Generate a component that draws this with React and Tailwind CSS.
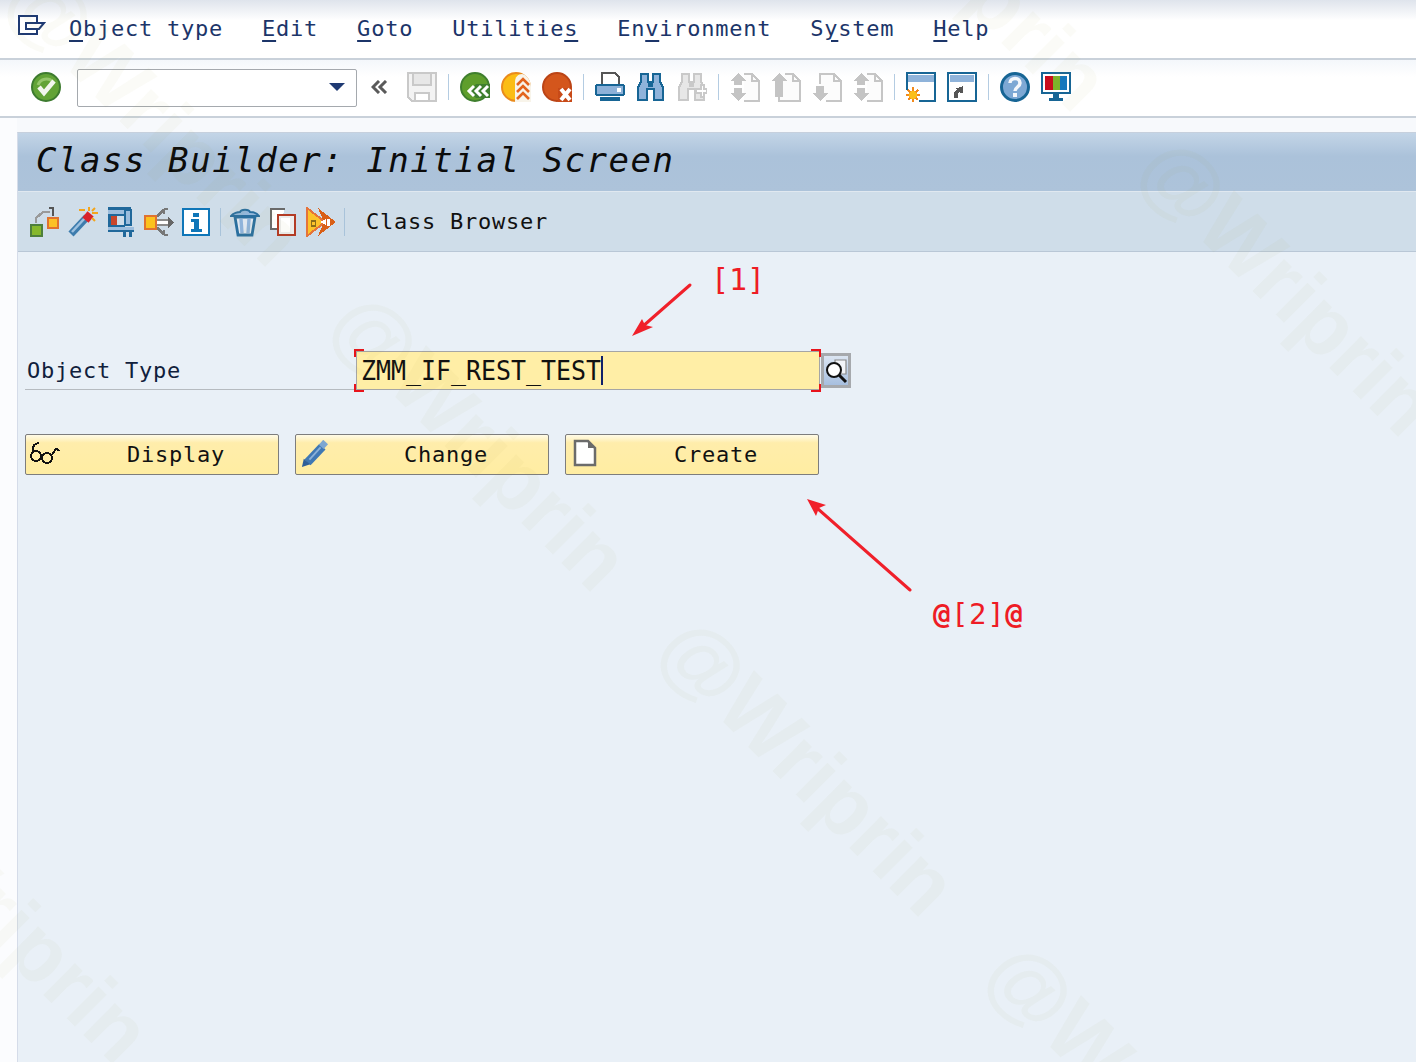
const MONO = 'font-["DejaVu_Sans_Mono","Liberation_Mono",monospace]';

function S({ children, className = "w-[30px] h-[30px]", box = "0 0 30 30", crisp = false }) {
  return (
    <svg viewBox={box} className={"shrink-0 " + className} shapeRendering={crisp ? "crispEdges" : "auto"}>
      {children}
    </svg>
  );
}

const Sep = () => <div className="w-px h-[26px] bg-[#b4cce2] shrink-0" />;
const Sep2 = () => <div className="w-px h-[28px] bg-[#a9c3da] shrink-0" />;

const IcMenu = () => (
  <svg viewBox="0 0 28 20" className="w-[28px] h-[20px]" fill="none" stroke="#1f3a73" strokeWidth="2">
    <path d="M19 8V1H1v18h18v-5" />
    <path d="M8 8h18l-5 6H8z" fill="#fff" />
  </svg>
);
const IcCheck = () => (
  <S>
    <circle cx="15" cy="15" r="14" fill="#62a336" stroke="#3d7b2f" strokeWidth="2" />
    <path d="M7 13a9 9 0 0 1 15-3" stroke="#94c66a" strokeWidth="3" fill="none" />
    <path d="M8 15l5 6 10-12" stroke="#f2f6ee" strokeWidth="4.5" fill="none" />
  </S>
);
const IcSave = () => (
  <S crisp>
    <path d="M1 1h28v28H5l-4-4z" fill="#f3f3f3" stroke="#c9c9c9" strokeWidth="2.5" />
    <rect x="6" y="1" width="18" height="12" fill="#e7e7e7" stroke="#c9c9c9" strokeWidth="2.5" />
    <rect x="8" y="21" width="14" height="8" fill="#fff" stroke="#c9c9c9" strokeWidth="2.5" />
  </S>
);
const IcBack = () => (
  <S>
    <circle cx="15" cy="15" r="14" fill="#5f9e2c" stroke="#3f7f2e" strokeWidth="2" />
    <path d="M16 12l-7 7 7 7h8l-7-7 7-7zM24 12l-7 7 7 7h6V12z" fill="#3f7f2e" />
    <path d="M14 14l-5 5 5 5M21 14l-5 5 5 5M28 14l-5 5 5 5" stroke="#fff" strokeWidth="3" fill="none" />
  </S>
);
const IcExit = () => (
  <S>
    <circle cx="15" cy="15" r="14" fill="#fbbd14" stroke="#ea8b1c" strokeWidth="2" />
    <path d="M14 30V10c0-5 3-8 7-8 5 1 9 7 9 13v15z" fill="#f8f4ea" />
    <path d="M16 13l6-6 6 6M16 20l6-6 6 6M16 27l6-6 6 6" stroke="#e3641c" strokeWidth="2.6" fill="none" />
  </S>
);
const IcCancel = () => (
  <S>
    <circle cx="15" cy="15" r="14" fill="#d4561c" stroke="#bb4416" strokeWidth="2" />
    <path d="M16 16h14v14H16z" fill="#c84a18" />
    <path d="M19 17l9 11M28 17l-9 11" stroke="#fff" strokeWidth="4" />
  </S>
);
const IcPrint = () => (
  <S crisp>
    <path d="M7 13V1h13l4 4v8" fill="#fff" stroke="#555" strokeWidth="2" />
    <rect x="1" y="13" width="28" height="10" rx="2" fill="#8db1d8" stroke="#176595" strokeWidth="2" />
    <rect x="22" y="16" width="4" height="4" fill="#fff" />
    <rect x="5" y="25" width="20" height="4" fill="#176595" />
  </S>
);
const Binoc = ({ line, fill }) => (
  <>
    <path d="M5 2h7v8h5V2h7v8l3 5v13h-9V17h-7v11H2V15l3-5z" fill={fill} stroke={line} strokeWidth="2.2" />
    <path d="M12 10h5v5h-5z" fill={line} />
  </>
);
const IcFind = () => (
  <S crisp><Binoc line="#176595" fill="#8fb3da" /></S>
);
const IcFindNext = () => (
  <S crisp>
    <Binoc line="#c9c9c9" fill="#e7e7e7" />
    <path d="M19 17h5v-4h3v4h3v4h-3v4h-3v-4h-5z" fill="#fff" stroke="#c9c9c9" strokeWidth="1.5" />
  </S>
);
const Page = ({ d }) => (
  <>
    <path d={d} fill="#fcfcfc" stroke="#c6c6c6" strokeWidth="2" />
    <path d="M22 2v7h7" fill="none" stroke="#c6c6c6" strokeWidth="2" />
  </>
);
const IcFirst = () => (
  <S crisp>
    <Page d="M14 2h8l7 7v20H14" />
    <path d="M8 1l8 8h-4v4H4V9H0zM8 29l-8-8h4v-5h8v5h4z" fill="#c4c4c4" />
  </S>
);
const IcPrev = () => (
  <S crisp>
    <Page d="M8 20v9h21V9l-7-7H14" />
    <path d="M8 1l8 8h-4v16H4V9H0z" fill="#c4c4c4" />
  </S>
);
const IcNext = () => (
  <S crisp>
    <Page d="M8 12V2h14l7 7v20H14" />
    <path d="M8 29l8-8h-4V14H4v7H0z" fill="#c4c4c4" />
  </S>
);
const IcLast = () => (
  <S crisp>
    <Page d="M14 2h8l7 7v20H14" />
    <path d="M8 1l8 8h-4v4H4V9H0zM8 29l-8-8h4v-5h8v5h4z" fill="#c4c4c4" />
  </S>
);
const IcWinNew = () => (
  <S crisp>
    <path d="M13 29h16V1H1v17" fill="#fff" stroke="#176595" strokeWidth="2" />
    <rect x="2" y="3" width="26" height="7" fill="#8fb3da" />
    <path d="M7 15v15M0 23h14M2 18l10 10M12 18L2 28" stroke="#f28a1c" strokeWidth="1.6" />
    <circle cx="7" cy="23" r="4" fill="#fbbf1a" />
  </S>
);
const IcWinShort = () => (
  <S crisp>
    <rect x="1" y="1" width="28" height="28" fill="#fff" stroke="#176595" strokeWidth="2" />
    <rect x="3" y="3" width="24" height="7" fill="#8fb3da" />
    <path d="M7 26v-6l3-3H8l8-3v7h-3v-2l-2 3v4z" fill="#555" />
  </S>
);
const IcHelp = () => (
  <S>
    <circle cx="15" cy="15" r="13.5" fill="#7da8d4" stroke="#176595" strokeWidth="3" />
    <path d="M10 11c0-6 10-6 10 0 0 4-5 4-5 8" stroke="#f4f7fb" strokeWidth="3.5" fill="none" />
    <rect x="13" y="21" width="4" height="4" fill="#f4f7fb" />
  </S>
);
const IcMonitor = () => (
  <S crisp>
    <rect x="1" y="1" width="28" height="20" fill="#fff" stroke="#176595" strokeWidth="2" />
    <rect x="4" y="4" width="8" height="14" fill="#c9071b" />
    <rect x="12" y="4" width="7" height="14" fill="#7cb32a" />
    <rect x="19" y="4" width="7" height="14" fill="#1477bd" />
    <rect x="12" y="22" width="6" height="4" fill="#176595" />
    <rect x="8" y="26" width="14" height="3" fill="#176595" />
  </S>
);

const IcHier = () => (
  <S crisp>
    <path d="M6 16v-5l7-6h7" fill="none" stroke="#9a9a9a" strokeWidth="2.4" />
    <path d="M19 1h4v8" fill="none" stroke="#555" strokeWidth="2" />
    <rect x="1" y="18" width="11" height="11" fill="#86b82c" stroke="#4e7f3c" strokeWidth="2.6" />
    <rect x="18" y="11" width="10" height="10" fill="#fcc126" stroke="#e0722f" strokeWidth="2.6" />
  </S>
);
const IcWand = () => (
  <S>
    <path d="M3 27L19 10" stroke="#3d7cad" strokeWidth="7" />
    <path d="M4 25L17 11" stroke="#9dc0df" strokeWidth="2.5" />
    <rect x="16" y="6" width="8" height="8" fill="#d9232b" transform="rotate(40 20 10)" />
    <path d="M21 0v4M30 6h-6M27 1l-3 3M27 14l-3-3M11 3h6" stroke="#f3a51c" strokeWidth="2" />
  </S>
);
const IcClamp = () => (
  <S crisp box="0 0 26 30" className="w-[26px] h-[30px]">
    <rect x="0" y="0" width="23" height="3" fill="#20689b" />
    <rect x="0" y="3" width="17" height="4" fill="#9cbddd" />
    <rect x="0" y="7" width="17" height="2" fill="#20689b" />
    <rect x="17" y="3" width="6" height="15" fill="#9cbddd" stroke="#20689b" strokeWidth="1.6" />
    <rect x="0" y="9" width="3" height="9" fill="#20689b" />
    <rect x="3" y="9" width="6" height="9" fill="#c9452a" />
    <rect x="0" y="18" width="17" height="2" fill="#20689b" />
    <rect x="0" y="20" width="26" height="3" fill="#9cbddd" />
    <rect x="0" y="23" width="26" height="2" fill="#20689b" />
    <rect x="15" y="25" width="3" height="5" fill="#20689b" />
    <rect x="21" y="25" width="3" height="5" fill="#20689b" />
  </S>
);
const IcMove = () => (
  <S crisp>
    <path d="M12 10l9-8h3M12 20l9 8h3M20 2v5M20 28v-5" stroke="#777" strokeWidth="2.6" fill="none" />
    <path d="M12 13h13v5H12z" fill="#fff" stroke="#8b8b8b" strokeWidth="1.2" />
    <path d="M24 9l6 6.5-6 6.5z" fill="#666" />
    <rect x="1" y="9" width="11" height="13" fill="#fcc21d" stroke="#e0722f" strokeWidth="2.6" />
  </S>
);
const IcInfo = () => (
  <S crisp box="0 0 28 28" className="w-[28px] h-[28px]">
    <rect x="1" y="1" width="26" height="26" fill="#fff" stroke="#0f76b8" strokeWidth="2" />
    <rect x="11" y="5" width="6" height="4" fill="#0f76b8" />
    <path d="M9 11h8v10h3v3H9v-3h3v-7H9z" fill="#0f76b8" />
  </S>
);
const IcTrash = () => (
  <S>
    <path d="M1 9c2-3 7-4 9-4 1-3 9-3 10 0 3 0 7 1 9 4z" fill="#93b7da" stroke="#2a6f9f" strokeWidth="2" />
    <path d="M5 10l3 18h14l3-18z" fill="#dfe7f0" stroke="#2a6f9f" strokeWidth="2.8" />
    <path d="M11 12l1 14M19 12l-1 14" stroke="#8fb3da" strokeWidth="3.4" />
  </S>
);
const IcCopy = () => (
  <S crisp box="0 0 26 28" className="w-[26px] h-[28px]">
    <path d="M15 1H1v20h7" fill="#fff" stroke="#6a6a6a" strokeWidth="2" />
    <rect x="8" y="7" width="17" height="20" fill="#ededed" stroke="#b33b25" strokeWidth="2" />
    <rect x="11" y="10" width="9" height="14" fill="#fff" />
  </S>
);
const IcActivate = () => (
  <S crisp>
    <path d="M12 1l18 14-18 14 6-14z" fill="#d95f17" />
    <path d="M1 1v28l18-14z" fill="#fcc32a" stroke="#e5733a" strokeWidth="2" />
    <path d="M14 15l6-3v6z" fill="#fff" />
    <path d="M5 13h5v7H5z" fill="#8a6d1a" />
    <path d="M6 15h3v3H6z" fill="#fcc32a" />
    <path d="M21 12h3v7h-3z" fill="#fff" />
  </S>
);

const Mn = ({ children }) => <span className="underline decoration-2 underline-offset-[4px]">{children}</span>;

const Btn = ({ icon, label }) => (
  <button className={"w-[254px] h-[41px] flex items-center relative rounded-[2px] border border-[#7d7d7d] pl-[48px] bg-linear-to-b from-[#fffbe8] from-0% via-[#ffedab] via-20% to-[#ffeda2] text-[22px] tracking-[0.76px] text-[#111] " + MONO}>
    <span className="absolute left-[3px] top-[5px] flex">{icon}</span>
    <span className="w-full text-center">{label}</span>
  </button>
);

const wm = [
  "left-[-34px] top-[66px]",
  "left-[291px] top-[391px]",
  "left-[619px] top-[716px]",
  "left-[946px] top-[1041px]",
  "left-[771px] top-[-89px]",
  "left-[1099px] top-[236px]",
  "left-[-187px] top-[863px]",
];

export default function App() {
  return (
    <div className={"relative w-[1416px] h-[1062px] overflow-hidden bg-white flex flex-col " + MONO}>
      <div className="h-[60px] shrink-0 border-b-2 border-[#c9d1da] bg-linear-to-b from-[#dfe4ec] to-white to-35% flex items-start">
        <div className="ml-[18px] mt-[15px]"><IcMenu /></div>
        <nav className="ml-[23px] mt-[14px] flex gap-[39px] text-[22px] leading-[30px] tracking-[0.76px] text-[#1c3569]">
          <span><Mn>O</Mn>bject type</span>
          <span><Mn>E</Mn>dit</span>
          <span><Mn>G</Mn>oto</span>
          <span>Utilitie<Mn>s</Mn></span>
          <span>En<Mn>v</Mn>ironment</span>
          <span>S<Mn>y</Mn>stem</span>
          <span><Mn>H</Mn>elp</span>
        </nav>
      </div>

      <div className="h-[58px] shrink-0 border-b-2 border-[#c9d1da] bg-linear-to-b from-[#f4f7fb] to-white to-30% flex items-center pl-[31px] pb-[2px]">
        <IcCheck />
        <div className="ml-[16px] mt-[2px] w-[280px] h-[38px] bg-white border border-[#a5a9ae] rounded-[2px] relative shrink-0">
          <div className="absolute right-[11px] top-[13px] w-0 h-0 border-x-[8px] border-x-transparent border-t-[8px] border-t-[#1f3a73]" />
        </div>
        <span className="ml-[14px] w-[19px] shrink-0">
          <svg viewBox="0 0 17 14" className="w-[17px] h-[14px]" fill="none" stroke="#5a5a5a" strokeWidth="3">
            <path d="M8 1L2 7l6 6M15 1L9 7l6 6" />
          </svg>
        </span>
        <div className="ml-[17px] flex items-center gap-[11px]">
          <IcSave /><Sep /><IcBack /><IcExit /><IcCancel /><Sep />
          <IcPrint /><IcFind /><IcFindNext /><Sep />
          <IcFirst /><IcPrev /><IcNext /><IcLast /><Sep />
          <IcWinNew /><IcWinShort /><Sep /><IcHelp /><IcMonitor />
        </div>
      </div>

      <div className="flex-1 flex bg-[#f7f9fc] min-h-0">
        <div className="w-[17px] shrink-0 bg-[#fbfcfe]" />
        <div className="flex-1 flex flex-col mt-[14px] border-l border-t border-l-[#d5dce9] border-t-[#c6d0dd] min-w-0 bg-[#e9f0f7]">
          <div className="h-[58px] shrink-0 flex items-center pl-[18px] pb-[4px] bg-linear-to-b from-[#c3d5e7] via-[#abc2da] via-40% to-[#adc3da] italic text-[34px] tracking-[1.55px] text-[#0b0b0b]">
            Class Builder: Initial Screen
          </div>
          <div className="h-[61px] shrink-0 border-t border-b border-t-[#e0e8f0] border-b-[#b9c7d6] bg-[#cfdde9] flex items-center pl-[12px] gap-[8px]">
            <div className="w-[30px] flex"><IcHier /></div>
            <div className="w-[30px] flex"><IcWand /></div>
            <div className="w-[30px] flex pl-[2px]"><IcClamp /></div>
            <div className="w-[30px] flex"><IcMove /></div>
            <div className="w-[30px] flex"><IcInfo /></div>
            <Sep2 />
            <div className="ml-px w-[30px] flex"><IcTrash /></div>
            <div className="w-[30px] flex pl-[2px]"><IcCopy /></div>
            <div className="w-[30px] flex"><IcActivate /></div>
            <Sep2 />
            <span className="ml-[13px] text-[22px] tracking-[0.76px] text-[#111]">Class Browser</span>
          </div>

          <div className="flex items-start pl-[7px] pt-[99px]">
            <div className="w-[330px] h-[39px] border-b border-[#b6bbc0] pl-[2px] pt-[5px] text-[22px] leading-[30px] tracking-[0.76px] text-[#10203c]">Object Type</div>
            <div className="ml-[1px] w-[464px] h-[39px] bg-[#ffeea6] border border-[#a5a5a5] relative pl-[4px] text-[27px] leading-[38px] text-[#111] flex items-center">
              <span className="inline-block w-[240px] whitespace-nowrap origin-left scale-x-[0.923]">ZMM_IF_REST_TEST</span>
              <span className="w-[2px] h-[29px] bg-[#10206a]" />
              <span className="absolute -left-[3px] -top-[3px] w-[10px] h-[8px] border-l-2 border-t-2 border-[#e8131b]" />
              <span className="absolute -left-[3px] -bottom-[3px] w-[10px] h-[8px] border-l-2 border-b-2 border-[#e8131b]" />
              <span className="absolute -right-[2px] -top-[3px] w-[10px] h-[8px] border-r-2 border-t-2 border-[#e8131b]" />
              <span className="absolute -right-[2px] -bottom-[3px] w-[10px] h-[8px] border-r-2 border-b-2 border-[#e8131b]" />
            </div>
            <div className="ml-[1px] mt-[2px] w-[30px] h-[35px] border-[3px] border-[#a6a9ad] bg-linear-to-b from-[#dbe5f2] to-[#a7bfdf] flex items-center justify-center">
              <svg viewBox="0 0 24 26" className="w-[24px] h-[26px]">
                <path d="M11 2h11v14H11z" fill="#f2f4f8" stroke="#888" strokeWidth="1.2" />
                <circle cx="10" cy="12" r="7" fill="#fff" stroke="#111" strokeWidth="2" />
                <path d="M15 17l7 7" stroke="#111" strokeWidth="3" />
              </svg>
            </div>
          </div>

          <div className="flex pl-[7px] pt-[44px] gap-[16px]">
            <Btn label="Display" icon={
              <svg viewBox="0 0 32 24" className="w-[32px] h-[24px]" fill="none" stroke="#111" strokeWidth="2" shapeRendering="crispEdges">
                <circle cx="7" cy="16" r="5" /><circle cx="18" cy="18" r="5" />
                <path d="M12 16h2M4 12C3 6 6 3 10 3M23 15l3-5c1-2 3-1 4 1" />
              </svg>
            } />
            <Btn label="Change" icon={
              <svg viewBox="0 0 30 30" className="w-[28px] h-[28px] ml-[2px]">
                <path d="M7 24L23 7" stroke="#3f78b4" strokeWidth="9" />
                <path d="M9 21L21 8" stroke="#8ab0d8" strokeWidth="2" />
                <path d="M1 29l2-9 7 6z" fill="#2e5f99" />
                <rect x="21" y="1" width="7" height="7" fill="#7da7d1" transform="rotate(42 24 4)" />
              </svg>
            } />
            <Btn label="Create" icon={
              <svg viewBox="0 0 24 28" className="w-[24px] h-[28px] ml-[4px] -mt-[1px]">
                <path d="M2 2h13l7 7v17H2z" fill="#fff" stroke="#6b6b6b" strokeWidth="2.5" />
                <path d="M15 2v7h7z" fill="#6b6b6b" />
              </svg>
            } />
          </div>
        </div>
      </div>

      {/* annotations over the screen */}
      <svg viewBox="0 0 1416 1062" className="absolute inset-0 w-[1416px] h-[1062px] pointer-events-none">
        <path d="M690 285L642 327" stroke="#f0202a" strokeWidth="3" strokeLinecap="round" />
        <path d="M632 336l10-17 3 6 8 2z" fill="#f0202a" />
        <path d="M910 590L817 508" stroke="#f0202a" strokeWidth="3" strokeLinecap="round" />
        <path d="M807 499l19 6-7 3-3 8z" fill="#f0202a" />
      </svg>
      <span className="absolute left-[711px] top-[262px] text-[30px] leading-[36px] text-[#ee1c25]">[1]</span>
      <span className="absolute left-[933px] top-[596px] text-[29px] leading-[36px] tracking-[0.6px] text-[#ee1c25]"><b>@</b>[2]<b>@</b></span>

      {/* watermark */}
      {wm.map((c) => (
        <span key={c} className={"absolute rotate-45 pointer-events-none font-['Liberation_Sans',sans-serif] font-bold text-[85px] leading-[100px] whitespace-nowrap text-[#9ea548]/[0.045] " + c}>@Wriprin</span>
      ))}
    </div>
  );
}
